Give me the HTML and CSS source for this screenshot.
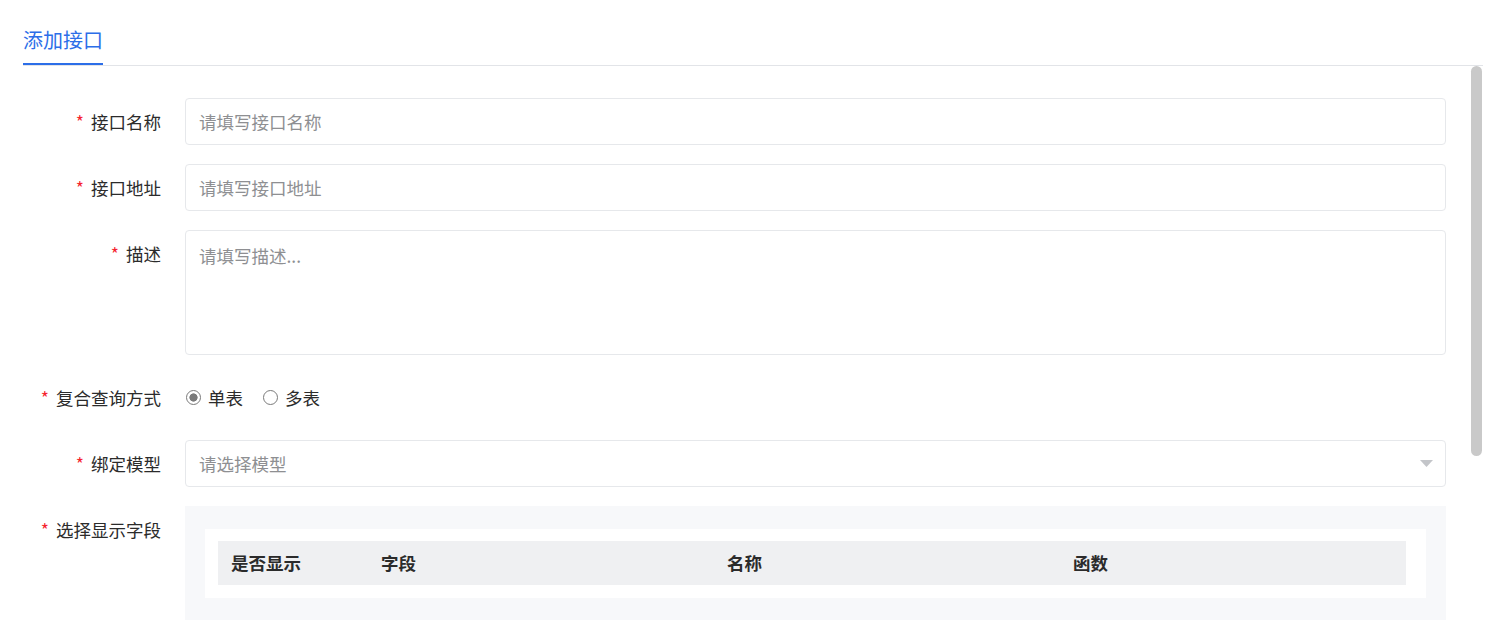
FILE: index.html
```html
<!DOCTYPE html>
<html lang="zh-CN">
<head>
<meta charset="utf-8">
<title>添加接口</title>
<link rel="stylesheet" href="styles.css">
</head>
<body>
<div class="page">
  <div class="tabs">
    <div class="tab active">添加接口</div>
  </div>
  <div class="body">
    <form class="form">
      <div class="row">
        <label class="label"><span class="req">*</span>接口名称</label>
        <div class="control"><input class="input" type="text" placeholder="请填写接口名称"></div>
      </div>
      <div class="row">
        <label class="label"><span class="req">*</span>接口地址</label>
        <div class="control"><input class="input" type="text" placeholder="请填写接口地址"></div>
      </div>
      <div class="row">
        <label class="label"><span class="req">*</span>描述</label>
        <div class="control"><textarea class="input textarea" placeholder="请填写描述..."></textarea></div>
      </div>
      <div class="row">
        <label class="label"><span class="req">*</span>复合查询方式</label>
        <div class="control radio-group">
          <span class="radio"><span class="radio-dot checked"></span>单表</span>
          <span class="radio"><span class="radio-dot"></span>多表</span>
        </div>
      </div>
      <div class="row">
        <label class="label"><span class="req">*</span>绑定模型</label>
        <div class="control">
          <div class="input select">
            <span class="placeholder">请选择模型</span>
            <svg class="arrow" width="13" height="7" viewBox="0 0 13 7"><path d="M0 0 H13 L6.5 7 Z" fill="#c3c5c9"/></svg>
          </div>
        </div>
      </div>
      <div class="row">
        <label class="label"><span class="req">*</span>选择显示字段</label>
        <div class="control">
          <div class="fields-box">
            <div class="fields-inner">
              <div class="thead">
                <div class="th">是否显示</div>
                <div class="th">字段</div>
                <div class="th">名称</div>
                <div class="th">函数</div>
              </div>
            </div>
          </div>
        </div>
      </div>
    </form>
    <div class="scroll-thumb"></div>
  </div>
</div>
</body>
</html>
```

FILE: styles.css
```css
html, body {
  margin: 0;
  padding: 0;
  background: #fff;
}
body {
  font-family: "Noto Sans CJK SC", "Noto Sans", sans-serif;
  color: #333;
}
.page {
  height: 629px;
  overflow: hidden;
  padding: 0 7px 0 23px;
}
.tabs {
  display: flex;
  border-bottom: 1px solid #e2e4e8;
}
.tab {
  font-size: 20px;
  line-height: 30px;
  padding: 25px 0 8px;
  color: #2c6ee8;
  border-bottom: 2px solid #2c6ee8;
}
.body {
  position: relative;
  height: 563px;
  overflow: hidden;
}
.form {
  margin: 0;
  padding: 32px 37px 0 0;
}
.row {
  display: flex;
  margin-bottom: 19px;
}
.label {
  flex: 0 0 162px;
  box-sizing: border-box;
  padding-right: 24px;
  text-align: right;
  font-size: 17.5px;
  line-height: 47px;
  color: #2b2b2b;
}
.req {
  color: #f5222d;
  margin-right: 7px;
}
.control {
  flex: 1;
  min-width: 0;
}
.input {
  display: block;
  width: 100%;
  height: 47px;
  box-sizing: border-box;
  border: 1px solid #e6e8eb;
  border-radius: 4px;
  padding: 0 13px;
  font-family: inherit;
  font-size: 17.5px;
  color: #333;
  background: #fff;
  outline: none;
}
.input::placeholder {
  color: #8e8f92;
}
.textarea {
  height: 125px;
  padding: 12px 13px;
  line-height: 25px;
  resize: none;
}
.select {
  display: flex;
  align-items: center;
  justify-content: space-between;
  padding: 0 12px 0 13px;
}
.placeholder {
  color: #8e8f92;
}
.radio-group {
  display: flex;
  align-items: center;
  height: 47px;
  font-size: 17.5px;
}
.radio {
  display: flex;
  align-items: center;
  margin-right: 19px;
  color: #2b2b2b;
}
.radio-dot {
  width: 15px;
  height: 15px;
  box-sizing: border-box;
  border-radius: 50%;
  border: 1px solid #7a7a7a;
  background: #fff;
  margin: 0 7px 0 1px;
}
.radio-dot.checked {
  background: radial-gradient(circle, #7a7a7a 0 3.8px, #fff 4.4px);
}
.fields-box {
  background: #f7f8fa;
  padding: 23px 20px 22px;
}
.fields-inner {
  background: #fff;
  padding: 12px 20px 13px 13px;
}
.thead {
  display: grid;
  grid-template-columns: 150px repeat(3, 1fr);
  background: #eff0f2;
  height: 44px;
}
.th {
  padding-left: 13px;
  line-height: 44px;
  font-size: 17.5px;
  font-weight: 700;
  color: #2b2b2b;
}
.scroll-thumb {
  position: absolute;
  top: 0;
  right: 1px;
  width: 11px;
  height: 390px;
  border-radius: 6px;
  background: #c9c9c9;
}
```
